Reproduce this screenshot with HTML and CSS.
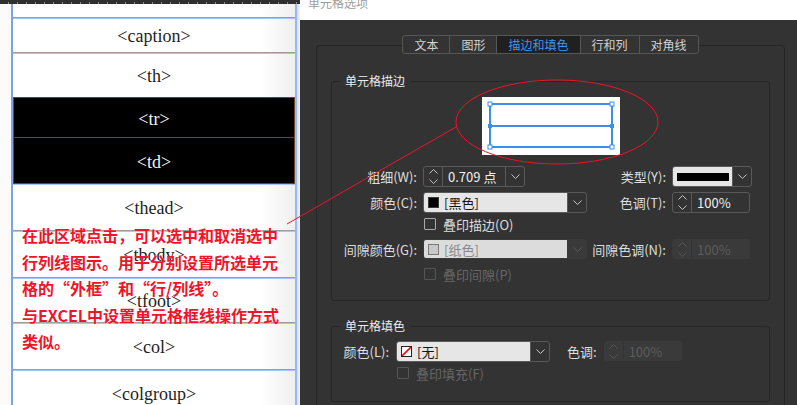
FILE: index.html
```html
<!DOCTYPE html>
<html lang="zh-CN">
<head>
<meta charset="utf-8">
<title>单元格选项</title>
<link rel="stylesheet" href="styles.css">
</head>
<body>
<div class="doc">
  <div class="ruler"></div>
  <div class="sheet">
    <div class="gutter"></div>
    <div class="grid">
      <div class="row r-top"></div>
      <div class="row r-caption">&lt;caption&gt;</div>
      <div class="row r-th">&lt;th&gt;</div>
      <div class="row r-tr sel">&lt;tr&gt;</div>
      <div class="row r-td sel">&lt;td&gt;</div>
      <div class="row r-thead after-sel">&lt;thead&gt;</div>
      <div class="row r-tbody">&lt;tbody&gt;</div>
      <div class="row r-tfoot">&lt;tfoot&gt;</div>
      <div class="row r-col">&lt;col&gt;</div>
      <div class="row r-colgroup">&lt;colgroup&gt;</div>
    </div>
    <div class="edge"></div>
  </div>
  <div class="note">在此区域点击，可以选中和取消选中<br>行列线图示。用于分别设置所选单元<br>格的“外框”和“行/列线”。<br>与EXCEL中设置单元格框线操作方式<br>类似。</div>
</div>

<div class="dialog">
  <div class="titlebar"><span class="title">单元格选项</span></div>
  <div class="body">
    <div class="outer">
      <div class="tabs">
        <div class="tab">文本</div>
        <div class="tab">图形</div>
        <div class="tab active">描边和填色</div>
        <div class="tab">行和列</div>
        <div class="tab">对角线</div>
      </div>

      <div class="group g-stroke">
        <div class="legend">单元格描边</div>
        <div class="preview">
          <svg width="138" height="58" viewBox="0 0 138 58">
            <rect x="0" y="0" width="138" height="58" fill="#fff"/>
            <rect x="8" y="7" width="122" height="43" fill="none" stroke="#3a8fe8" stroke-width="2"/>
            <line x1="8" y1="29" x2="130" y2="29" stroke="#3a8fe8" stroke-width="2"/>
            <rect x="6" y="5" width="4" height="4" fill="#fff" stroke="#3a8fe8" stroke-width="1"/>
            <rect x="128" y="5" width="4" height="4" fill="#fff" stroke="#3a8fe8" stroke-width="1"/>
            <rect x="6" y="48" width="4" height="4" fill="#fff" stroke="#3a8fe8" stroke-width="1"/>
            <rect x="128" y="48" width="4" height="4" fill="#fff" stroke="#3a8fe8" stroke-width="1"/>
            <rect x="6" y="27" width="4" height="4" fill="#3a8fe8"/>
            <rect x="128" y="27" width="4" height="4" fill="#3a8fe8"/>
          </svg>
        </div>
        <div class="form">
          <div class="lbl">粗细(W):</div>
          <div class="spin w-weight">
            <div class="spin-arr"><svg width="9" height="17" viewBox="0 0 9 17"><polyline points="0.5,5.5 4.5,1.5 8.5,5.5" fill="none" stroke="#c4c4c4"/><polyline points="0.5,11.5 4.5,15.5 8.5,11.5" fill="none" stroke="#c4c4c4"/></svg></div>
            <div class="spin-val">0.709 点</div>
            <div class="arrow"><svg width="9" height="5" viewBox="0 0 9 5"><polyline points="0.5,0.5 4.5,4.5 8.5,0.5" fill="none" stroke="#c4c4c4"/></svg></div>
          </div>
          <div class="lbl">类型(Y):</div>
          <div class="dd w-type">
            <div class="dd-main"><span class="linebar"></span></div>
            <div class="arrow"><svg width="9" height="5" viewBox="0 0 9 5"><polyline points="0.5,0.5 4.5,4.5 8.5,0.5" fill="none" stroke="#c4c4c4"/></svg></div>
          </div>

          <div class="lbl">颜色(C):</div>
          <div class="dd w-color">
            <div class="dd-main"><span class="sw sw-black"></span><span>[黑色]</span></div>
            <div class="arrow"><svg width="9" height="5" viewBox="0 0 9 5"><polyline points="0.5,0.5 4.5,4.5 8.5,0.5" fill="none" stroke="#c4c4c4"/></svg></div>
          </div>
          <div class="lbl">色调(T):</div>
          <div class="spin w-tint">
            <div class="spin-arr"><svg width="9" height="17" viewBox="0 0 9 17"><polyline points="0.5,5.5 4.5,1.5 8.5,5.5" fill="none" stroke="#c4c4c4"/><polyline points="0.5,11.5 4.5,15.5 8.5,11.5" fill="none" stroke="#c4c4c4"/></svg></div>
            <div class="spin-val">100%</div>
          </div>

          <div class="check-row"><span class="cb"></span><span>叠印描边(O)</span></div>

          <div class="lbl">间隙颜色(G):</div>
          <div class="dd w-color disabled">
            <div class="dd-main"><span class="sw sw-paper"></span><span>[纸色]</span></div>
            <div class="arrow"><svg width="9" height="5" viewBox="0 0 9 5"><polyline points="0.5,0.5 4.5,4.5 8.5,0.5" fill="none" stroke="#5a5a5a"/></svg></div>
          </div>
          <div class="lbl">间隙色调(N):</div>
          <div class="spin w-tint disabled">
            <div class="spin-arr"><svg width="9" height="17" viewBox="0 0 9 17"><polyline points="0.5,5.5 4.5,1.5 8.5,5.5" fill="none" stroke="#555"/><polyline points="0.5,11.5 4.5,15.5 8.5,11.5" fill="none" stroke="#555"/></svg></div>
            <div class="spin-val">100%</div>
          </div>

          <div class="check-row disabled"><span class="cb"></span><span>叠印间隙(P)</span></div>
        </div>
      </div>

      <div class="group g-fill">
        <div class="legend">单元格填色</div>
        <div class="fill-row">
          <div class="lbl l-fill">颜色(L):</div>
          <div class="dd w-fill">
            <div class="dd-main"><span class="sw sw-none"><svg width="11" height="11" viewBox="0 0 11 11"><line x1="0" y1="11" x2="11" y2="0" stroke="#e01010" stroke-width="1.6"/></svg></span><span>[无]</span></div>
            <div class="arrow"><svg width="9" height="5" viewBox="0 0 9 5"><polyline points="0.5,0.5 4.5,4.5 8.5,0.5" fill="none" stroke="#c4c4c4"/></svg></div>
          </div>
          <div class="lbl l-tint">色调:</div>
          <div class="spin w-tint disabled">
            <div class="spin-arr"><svg width="9" height="17" viewBox="0 0 9 17"><polyline points="0.5,5.5 4.5,1.5 8.5,5.5" fill="none" stroke="#555"/><polyline points="0.5,11.5 4.5,15.5 8.5,11.5" fill="none" stroke="#555"/></svg></div>
            <div class="spin-val">100%</div>
          </div>
        </div>
        <div class="check-row disabled fill-check"><span class="cb"></span><span>叠印填充(F)</span></div>
      </div>
    </div>
  </div>
</div>

<svg class="marks" width="797" height="405" viewBox="0 0 797 405">
  <ellipse cx="557" cy="122" rx="101" ry="42" fill="none" stroke="#ee1427" stroke-width="1"/>
  <line x1="287" y1="224" x2="456" y2="127" stroke="#ee1427" stroke-width="1"/>
</svg>
</body>
</html>
```

FILE: styles.css
```css
html, body {
  margin: 0;
  padding: 0;
}
body {
  width: 797px;
  height: 405px;
  overflow: hidden;
  display: flex;
  position: relative;
  background: #333;
  font-family: "Noto Sans CJK SC", "Noto Sans", sans-serif;
}

/* ---------- left document ---------- */
.doc {
  width: 300px;
  flex: none;
  display: flex;
  flex-direction: column;
  position: relative;
  background: #fff;
}
.ruler {
  height: 4px;
  flex: none;
  background-color: #2f2f2f;
  background-image: repeating-linear-gradient(to right, transparent 0 8px, #8a8a8a 8px 9px);
  background-size: 100% 2px;
  background-repeat: no-repeat;
  background-position: 0 2px;
}
.sheet {
  flex: 1;
  display: flex;
  min-height: 0;
}
.gutter {
  width: 11px;
  flex: none;
  background: #fbfbfb;
}
.grid {
  width: 282px;
  flex: none;
  border-left: 2px solid #7aa4e8;
  border-right: 2px solid #94baf3;
  display: flex;
  flex-direction: column;
  overflow: hidden;
}
.edge {
  width: 3px;
  flex: none;
  background: linear-gradient(to right, #dedede, #f3f3f3);
}
.row {
  flex: none;
  box-sizing: border-box;
  display: flex;
  align-items: center;
  justify-content: center;
  font-family: "Liberation Serif", "Times New Roman", serif;
  font-size: 18px;
  color: #1e1e1e;
  border-top: 1px solid #9c9c9c;
  box-shadow: inset 0 1px 0 #a9c7f6;
  background: linear-gradient(to right, #fff 88%, #efefef 100%);
  padding-top: 3px;
}
.r-top { height: 13px; border-top: none; box-shadow: none; }
.r-caption { height: 35px; }
.r-th { height: 45px; }
.r-tr { height: 40px; }
.r-td { height: 46px; }
.r-thead { height: 47px; }
.r-tbody { height: 47px; }
.r-tfoot { height: 45px; }
.r-col { height: 47px; }
.r-colgroup { height: 47px; }
.row.sel {
  background: #000;
  color: #f2f2f2;
  border-top: 1px solid #6b4716;
  box-shadow: inset 1px 0 #6b4716, inset -1px 0 #6b4716;
}
.row.after-sel {
  border-top: 1px solid #6b4716;
}

.note {
  position: absolute;
  left: 22px;
  top: 222px;
  font-size: 16px;
  line-height: 26.5px;
  font-weight: 700;
  color: #f0142a;
  white-space: nowrap;
  text-shadow: 0 0 1px #fff;
}

/* ---------- dialog ---------- */
.dialog {
  flex: 1;
  display: flex;
  flex-direction: column;
  min-width: 0;
}
.titlebar {
  height: 20px;
  flex: none;
  background: #fff;
  overflow: hidden;
  padding-left: 8px;
}
.title {
  display: block;
  font-size: 12px;
  line-height: 12px;
  margin-top: -3px;
  color: #9c9c9c;
}
.body {
  flex: 1;
  background: #333;
  padding: 25px 12px 0 16px;
  overflow: hidden;
}
.outer {
  border: 1px solid #262626;
  border-radius: 4px;
  padding: 0 14px 40px;
}
.tabs {
  display: flex;
  width: fit-content;
  margin: -11px auto 0;
  height: 19px;
  box-sizing: border-box;
  border: 1px solid #565656;
  border-radius: 3px;
  background: #333;
  overflow: hidden;
}
.tab {
  padding: 0 11px;
  font-size: 12px;
  line-height: 17px;
  color: #d2d2d2;
  border-right: 1px solid #565656;
}
.tab:last-child { border-right: none; }
.tab.active {
  background: #202020;
  color: #3f97f0;
}

.group {
  border: 1px solid #262626;
  border-radius: 3px;
  padding: 0 0 24px 0;
}
.g-stroke { margin-top: 27px; }
.g-fill { margin-top: 25px; padding-bottom: 22px; }
.legend {
  width: fit-content;
  margin: -9px 0 0 8px;
  padding: 0 5px;
  height: 16px;
  line-height: 16px;
  font-size: 12px;
  color: #ececec;
  background: #333;
}
.preview {
  width: 138px;
  height: 58px;
  margin: 8px auto 0;
}
.preview svg { display: block; }

.form {
  margin-top: 11px;
  display: grid;
  grid-template-columns: 85px 164px 73px 80px;
  grid-template-rows: 21px 21px 16px 20px 12px;
  column-gap: 6px;
  row-gap: 5px;
  align-items: center;
}
.lbl {
  justify-self: end;
  white-space: nowrap;
  font-size: 13px;
  color: #dedede;
}

.spin, .dd {
  display: flex;
  box-sizing: border-box;
  height: 21px;
  border: 1px solid #595959;
  border-radius: 3px;
  overflow: hidden;
}
.form .disabled, .fill-row .disabled { height: 20px; }
.spin-arr {
  width: 18px;
  flex: none;
  display: flex;
  align-items: center;
  justify-content: center;
  border-right: 1px solid #595959;
}
.spin-arr svg { display: block; }
.spin-val {
  flex: 1;
  display: flex;
  align-items: center;
  padding-left: 5px;
  font-size: 13px;
  color: #f0f0f0;
  white-space: nowrap;
}
.arrow {
  width: 18px;
  flex: none;
  display: flex;
  align-items: center;
  justify-content: center;
  border-left: 1px solid #595959;
}
.arrow svg { display: block; }
.dd-main {
  flex: 1;
  display: flex;
  align-items: center;
  gap: 5px;
  padding-left: 4px;
  background: #e6e6e6;
  font-size: 13px;
  color: #141414;
}
.w-weight { width: 102px; }
.w-type { width: 80px; }
.w-color { width: 164px; }
.w-tint { width: 78px; justify-self: start; }
.w-fill { width: 154px; }

.linebar {
  flex: 1;
  height: 8px;
  background: #000;
  margin-right: 3px;
}
.sw {
  width: 11px;
  height: 11px;
  box-sizing: border-box;
  flex: none;
  display: block;
}
.sw-black { background: #000; border: 1px solid #3a3a3a; }
.sw-paper { background: #c9c9c9; border: 1px solid #7a7a7a; }
.sw-none { background: #fff; border: 1px solid #222; overflow: hidden; }
.sw-none svg { display: block; margin: -1px; }

.spin.disabled {
  border-color: #3a3a3a;
  background: #3a3a3a;
}
.spin.disabled .spin-arr { border-right-color: #333; }
.spin.disabled .spin-val { color: #5c5c5c; }
.dd.disabled { border-color: #3a3a3a; }
.dd.disabled .dd-main { background: #dcdcdc; color: #8a8a8a; }
.dd.disabled .arrow { background: #3a3a3a; border-left-color: #3a3a3a; }

.check-row {
  grid-column: 2 / span 3;
  align-self: start;
  display: flex;
  align-items: center;
  gap: 7px;
  margin-left: 1px;
  height: 12px;
  font-size: 13px;
  color: #dedede;
  white-space: nowrap;
}
.cb {
  width: 12px;
  height: 12px;
  box-sizing: border-box;
  border: 1px solid #a8a8a8;
  border-radius: 1px;
  flex: none;
}
.check-row.disabled { color: #666; }
.check-row.disabled .cb { border-color: #555; }

.fill-row {
  display: flex;
  align-items: center;
  margin-top: 7px;
  height: 20px;
}
.fill-row .dd { height: 21px; }
.l-fill { width: 57px; text-align: right; }
.fill-row .w-fill { margin-left: 7px; }
.l-tint { margin-left: 17px; }
.fill-row .spin { margin-left: 7px; }
.fill-check { margin: 6px 0 0 65px; }

.marks {
  position: absolute;
  left: 0;
  top: 0;
  pointer-events: none;
}
```
